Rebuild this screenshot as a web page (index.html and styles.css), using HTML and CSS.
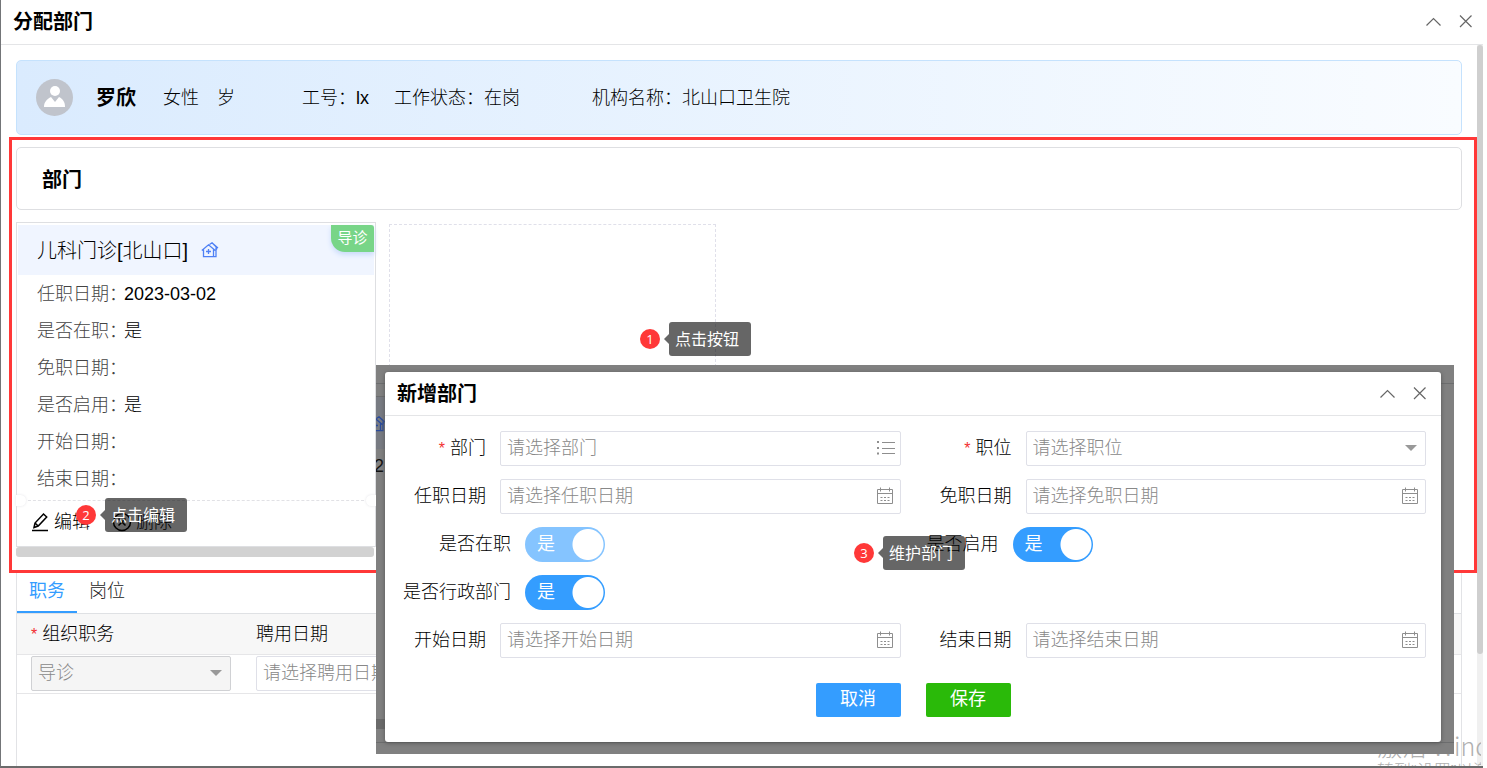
FILE: index.html
```html
<!DOCTYPE html>
<html lang="zh-CN">
<head>
<meta charset="utf-8">
<title>分配部门</title>
<link rel="stylesheet" href="styles.css">
</head>
<body>
<svg class="sprite" aria-hidden="true">
  <symbol id="up" viewBox="0 0 16 16"><path d="M.5 12.500 7.500 5.500 14.500 12.500"/></symbol>
  <symbol id="close" viewBox="0 0 16 16"><path d="M2 2.500 13.500 14M13.500 2.500 2 14"/></symbol>
  <symbol id="calendar" viewBox="0 0 18 18"><path d="M1.500 2.500h15v14h-15zM1.500 6.500h15M4.500 .5v4M13.500 .5v4"/><path d="M4.500 10.500h9M4.500 13.500h9" stroke-dasharray="2 1.500"/></symbol>
  <symbol id="list" viewBox="0 0 20 18"><path d="M6 3.500h13M6 9.500h13M6 14.500h13"/><path d="M1 3h2M1 9h2M1 14.500h2" stroke-width="2"/></symbol>
  <symbol id="house" viewBox="0 0 18 16"><path d="M.8 8.500 7.500 2.800l6.800 5.700M2.500 7.500v7.200h10V7.500M8.500 2.500 11 .8l6 5.200M15 5.500v9.200h-2.500M11 .8l4.500 4.500v2.500M7.500 7v5M5 9.500h5"/></symbol>
</svg>

<div class="window">
  <header class="titlebar">
    <h1 class="title">分配部门</h1>
    <div class="tools">
      <button class="tool" type="button" aria-label="收起"><svg><use href="#up"/></svg></button>
      <button class="tool" type="button" aria-label="关闭"><svg><use href="#close"/></svg></button>
    </div>
  </header>

  <div class="viewport">
    <main class="content">
      <section class="person">
        <svg class="avatar" viewBox="0 0 37 37"><circle cx="18.500" cy="18.500" r="18.500" fill="#c0c4cc"/><circle cx="19" cy="12" r="5" fill="#fff"/><path d="M8 28c0-5 3-8 7-10l4 5 4-5c4 2 6 5 6 10z" fill="#fff"/></svg>
        <strong class="name">罗欣</strong>
        <span class="sex">女性</span>
        <span class="age">岁</span>
        <span class="code">工号：lx</span>
        <span class="state">工作状态：在岗</span>
        <span>机构名称：北山口卫生院</span>
      </section>

      <section class="section-title"><h2 class="title">部门</h2></section>

      <section class="cards">
        <div class="card-scroll">
          <article class="card">
            <div class="card-head">
              <h3 class="card-name">儿科门诊[北山口]</h3>
              <svg class="house"><use href="#house"/></svg>
              <span class="tag">导诊</span>
            </div>
            <dl class="facts">
              <div class="fact"><dt>任职日期：</dt><dd>2023-03-02</dd></div>
              <div class="fact"><dt>是否在职：</dt><dd>是</dd></div>
              <div class="fact"><dt>免职日期：</dt><dd></dd></div>
              <div class="fact"><dt>是否启用：</dt><dd>是</dd></div>
              <div class="fact"><dt>开始日期：</dt><dd></dd></div>
              <div class="fact"><dt>结束日期：</dt><dd></dd></div>
            </dl>
            <div class="card-foot">
              <button class="action" type="button"><svg viewBox="0 0 18 20"><path d="M1 18.500h16M3 15.500l1-4.500L12.500 2l3.200 3L7.200 14zM4 11l3.200 3"/></svg>编辑</button>
              <button class="action" type="button"><svg viewBox="0 0 20 20"><circle cx="10" cy="10" r="8.500"/><path d="M6.500 6.500l7 7M13.500 6.500l-7 7"/></svg>删除</button>
            </div>
          </article>
          <div class="hbar"></div>
        </div>
        <div class="add-slot"></div>
      </section>

      <section class="duties">
        <nav class="tabs">
          <button class="tab active" type="button">职务</button>
          <button class="tab" type="button">岗位</button>
        </nav>
        <table class="table">
          <thead><tr><th class="col-duty"><i class="star">*</i> 组织职务</th><th>聘用日期</th></tr></thead>
          <tbody><tr>
            <td><div class="field short"><select class="control" disabled aria-label="组织职务"><option>导诊</option></select><span class="caret"></span></div></td>
            <td><div class="field short"><input class="control" type="text" placeholder="请选择聘用日期" aria-label="聘用日期"></div></td>
          </tr></tbody>
        </table>
      </section>
    </main>
    <div class="vbar"><div class="vthumb"></div></div>
  </div>

  <div class="frame"></div>
  <div class="watermark"><div class="wm-big">激活 Windows</div><div class="wm-small">转到“设置”以激活</div></div>

  <div class="overlay">
    <div class="behind" aria-hidden="true">
      <div class="behind-gap"></div>
      <div class="behind-line"></div>
      <div class="behind-head"><svg class="house"><use href="#house"/></svg></div>
      <div class="behind-date">2</div>
      <div class="behind-bar"></div>
      <div class="behind-rest"></div>
    </div>
    <form class="dialog" role="dialog" aria-labelledby="dialog-title">
      <header class="titlebar dialog-bar">
        <h2 class="title" id="dialog-title">新增部门</h2>
        <div class="tools">
          <button class="tool" type="button" aria-label="收起"><svg><use href="#up"/></svg></button>
          <button class="tool" type="button" aria-label="关闭"><svg><use href="#close"/></svg></button>
        </div>
      </header>
      <div class="form">
        <label class="label" for="dept"><i class="star">*</i> 部门</label>
        <div class="field"><input class="control" id="dept" type="text" placeholder="请选择部门"><svg class="icon list"><use href="#list"/></svg></div>
        <label class="label" for="post"><i class="star">*</i> 职位</label>
        <div class="field"><select class="control empty" id="post"><option>请选择职位</option></select><span class="caret"></span></div>

        <label class="label" for="hired">任职日期</label>
        <div class="field"><input class="control" id="hired" type="text" placeholder="请选择任职日期"><svg class="icon"><use href="#calendar"/></svg></div>
        <label class="label" for="left">免职日期</label>
        <div class="field"><input class="control" id="left" type="text" placeholder="请选择免职日期"><svg class="icon"><use href="#calendar"/></svg></div>

        <div class="switch-row first">
          <label class="label" for="onjob">是否在职</label>
          <span class="switch"><input id="onjob" type="checkbox" checked disabled><span class="switch-text">是</span></span>
        </div>
        <div class="switch-row">
          <label class="label" for="enabled">是否启用</label>
          <span class="switch"><input id="enabled" type="checkbox" checked><span class="switch-text">是</span></span>
        </div>
        <div class="switch-row first only">
          <label class="label" for="admin">是否行政部门</label>
          <span class="switch"><input id="admin" type="checkbox" checked><span class="switch-text">是</span></span>
        </div>

        <label class="label" for="start">开始日期</label>
        <div class="field"><input class="control" id="start" type="text" placeholder="请选择开始日期"><svg class="icon"><use href="#calendar"/></svg></div>
        <label class="label" for="end">结束日期</label>
        <div class="field"><input class="control" id="end" type="text" placeholder="请选择结束日期"><svg class="icon"><use href="#calendar"/></svg></div>
      </div>
      <footer class="buttons">
        <button class="btn cancel" type="button">取消</button>
        <button class="btn save" type="submit">保存</button>
      </footer>
    </form>
  </div>

  <div class="note note-1"><span class="dot">1</span><span class="tip">点击按钮</span></div>
  <div class="note note-2"><span class="dot">2</span><span class="tip">点击编辑</span></div>
  <div class="note note-3"><span class="dot">3</span><span class="tip">维护部门</span></div>
</div>
</body>
</html>
```
FILE: styles.css
```css
* { box-sizing: border-box; }

body {
  margin: 0;
  background: #fff;
  color: #000;
  font: 300 18px/24px "Liberation Sans", "Noto Sans CJK SC", sans-serif;
}

h1, h2, h3, dl, dd { margin: 0; }

button, input, select { font: inherit; color: inherit; }

button { padding: 0; border: 0; background: none; }

svg { fill: none; stroke: currentColor; }

.sprite { position: absolute; width: 0; height: 0; }

.window {
  position: relative;
  display: flex;
  flex-direction: column;
  height: 100vh;
  margin-right: 4px;
  overflow: hidden;
  border-left: 1px solid #737578;
  border-bottom: 2px solid #6b6b6b;
}

.titlebar {
  display: flex;
  flex: none;
  align-items: center;
  justify-content: space-between;
  height: 45px;
  padding: 0 9px 0 12px;
  border-bottom: 1px solid #e4e5e7;
}

.title { font-size: 20px; font-weight: 700; }

.tools { display: flex; gap: 16px; padding-bottom: 2px; color: #666; }
.tool { width: 16px; height: 16px; display: block; }
.tool svg { display: block; width: 16px; height: 16px; stroke-width: 1.2; }

.viewport { display: flex; flex: 1; min-height: 0; }

.content {
  display: flex;
  flex: 1;
  flex-direction: column;
  min-width: 0;
  padding: 15px 15px 0;
}

.person {
  display: flex;
  flex: none;
  align-items: center;
  height: 75px;
  padding-left: 19px;
  border: 1px solid #c5e2fd;
  border-radius: 5px;
  background: linear-gradient(90deg, #daebfe, #f9fcff);
  white-space: nowrap;
}
.avatar { width: 37px; height: 37px; margin-right: 23px; stroke: none; }
.name { margin-right: 27px; font-size: 20px; font-weight: 700; }
.sex { margin-right: 18px; }
.age { margin-right: 67px; }
.code { margin-right: 25px; }
.state { margin-right: 72px; }

.section-title {
  display: flex;
  flex: none;
  align-items: center;
  height: 63px;
  margin: 12px 0;
  padding: 2px 0 0 25px;
  border: 1px solid #dedfe2;
  border-radius: 5px;
}

.cards { display: flex; flex: none; gap: 13px; }

.card-scroll { width: 360px; }

.card {
  position: relative;
  padding: 2px 1px 0;
  border: 1px solid #dedfe2;
}
.card::before, .card::after {
  content: "";
  position: absolute;
  bottom: 40px;
  width: 10px;
  height: 11px;
  background: #fff;
  box-shadow: 0 0 3px #e4e4e8;
}
.card::before { left: -1px; border-radius: 0 6px 6px 0; }
.card::after { right: -1px; border-radius: 6px 0 0 6px; }

.card-head {
  position: relative;
  display: flex;
  align-items: center;
  gap: 13px;
  height: 50px;
  padding-left: 19px;
  background: #f0f5ff;
}
.card-name { padding-top: 1px; font-size: 20px; font-weight: 300; }
.house { width: 18px; height: 16px; color: #4f80f5; stroke-width: 1.3; }

.tag {
  position: absolute;
  top: 0;
  right: 0;
  width: 43px;
  height: 27px;
  border-radius: 0 3px 0 14px;
  background: #78d588;
  box-shadow: 0 3px 5px #cbdcfa;
  color: #fff;
  font-size: 15px;
  font-weight: 400;
  line-height: 26px;
  text-align: center;
}

.facts {
  display: grid;
  grid-auto-rows: 1fr;
  align-items: center;
  height: 225px;
  padding: 0 0 2px 19px;
}
.fact { display: flex; white-space: nowrap; }
.fact dt { width: 87px; color: #444; }

.card-foot {
  display: flex;
  align-items: center;
  gap: 22px;
  height: 46px;
  padding: 0 0 4px 12px;
  border-top: 1px dashed #e1e1e5;
}
.action { display: flex; align-items: center; gap: 4px; }
.action svg { width: 20px; height: 20px; stroke-width: 1.5; }

.hbar { height: 10px; margin-right: 2px; border-radius: 3px; background: #d2d2d2; }

.add-slot { width: 327px; margin-top: 2px; border: 1px dashed #e0e0ea; }

.duties {
  flex: 1;
  margin-top: 13px;
  border: 1px solid #e2e3e6;
  border-bottom: 0;
}
.tabs { display: flex; height: 43px; border-bottom: 1px solid #dfe1e4; }
.tab { width: 60px; padding-bottom: 2px; color: #222; }
.active { border-bottom: 2px solid #349dff; padding-bottom: 0; color: #349dff; font-weight: 400; }

.table { width: 100%; border-spacing: 0; text-align: left; }
.table th { height: 41px; padding: 0 0 0 14px; background: #f7f7f7; border-bottom: 1px solid #e6e6e8; font-weight: 300; }
.table td { height: 39px; padding: 0 0 1px 14px; border-bottom: 1px solid #e6e6e8; }
.table .col-duty { width: 225px; }

.star { color: #f23030; font-size: 16px; font-style: normal; }

.field { position: relative; min-width: 0; }
.short { width: 200px; }

.control {
  display: block;
  width: 100%;
  height: 35px;
  padding: 0 30px 1px 6px;
  appearance: none;
  border: 1px solid #dfe0e8;
  border-radius: 2px;
  background: #fff;
}
.control::placeholder { color: #888; opacity: 1; }
.control:disabled { border-color: #d0d1d4; background: #f5f5f5; color: #888; opacity: 1; }
.empty { color: #888; }

.icon { position: absolute; top: 8px; right: 7px; width: 18px; height: 18px; color: #8e8e8e; }
.list { right: 5px; width: 20px; }

.caret {
  position: absolute;
  top: 14px;
  right: 9px;
  border: 6px solid transparent;
  border-top: 6px solid #999;
  border-bottom: 0;
}

.vbar { width: 6px; background: #f0f0f0; }
.vthumb { height: 84.500%; border-radius: 3px; background: #cfcfcf; }

.frame {
  position: absolute;
  top: 137px;
  left: 8px;
  right: 6px;
  height: 436px;
  border: 3px solid #ff3838;
}

.watermark {
  position: absolute;
  top: 730px;
  left: calc(100% - 106px);
  width: 104px;
  overflow: hidden;
  color: #b0b0b0;
  white-space: nowrap;
}
.wm-big { font: 300 25px/30px "Noto Sans CJK SC", sans-serif; }
.wm-small { font-size: 17px; }

.overlay {
  position: absolute;
  top: 365px;
  left: 375px;
  right: 29px;
  height: 389px;
  padding: 7px 13px 12px 9px;
  background: #808080;
}

.behind { position: absolute; top: 0; left: 0; right: 0; height: 100%; overflow: hidden; }
.behind-gap { height: 19px; border-bottom: 1px solid #6c6d6e; }
.behind-line { width: 9px; height: 13px; border-bottom: 1px solid #6c6d6e; }
.behind-head { width: 9px; height: 52px; padding-top: 19px; overflow: hidden; background: #787b82; }
.behind-head .house { display: block; margin-left: -8px; color: #2b4b9b; }
.behind-date { height: 270px; padding-top: 5px; margin-left: -2px; color: #111; }
.behind-bar { width: 9px; height: 10px; background: #6a6a6a; }
.behind-rest { height: 14px; border-bottom: 1px solid #6c6d6e; }

.dialog {
  position: relative;
  height: 100%;
  border-radius: 3px;
  background: #fff;
  box-shadow: 0 1px 4px #555;
}
.dialog-bar { height: 44px; padding-right: 13px; }

.form {
  display: grid;
  grid-template-columns: 115px 1fr 125px 1fr;
  gap: 13px 0;
  align-items: center;
  padding: 15px 15px 0 0;
}
.label { padding: 0 14px 1px 0; text-align: right; white-space: nowrap; }

.switch-row { display: flex; grid-column: span 2; align-items: center; }
.switch-row .label { width: 112px; }
.first .label { width: 140px; }
.only { grid-column: 1 / -1; }

.switch { position: relative; display: block; width: 80px; height: 35px; }
.switch input {
  width: 100%;
  height: 100%;
  margin: 0;
  appearance: none;
  border-radius: 18px;
  background: radial-gradient(circle at 63px 50%, #fff 15px, transparent 16px) #349dff;
}
.switch input:disabled { background-color: #85c4ff; }
.switch-text { position: absolute; top: 5px; left: 12px; color: #fff; font-weight: 400; pointer-events: none; }

.buttons { display: flex; justify-content: center; gap: 25px; padding-top: 25px; }
.btn { width: 85px; height: 34px; padding-bottom: 2px; border-radius: 2px; color: #fff; font-weight: 400; }
.cancel { background: #349dff; }
.save { background: #2aba09; }

.note { position: absolute; display: flex; align-items: center; gap: 9px; }
.note-1 { top: 322px; left: 639px; }
.note-2 { top: 498px; left: 75px; }
.note-3 { top: 536px; left: 853px; }
.dot {
  width: 20px;
  height: 20px;
  border-radius: 50%;
  background: #ff3838;
  color: #fff;
  font: 13px/20px "Open Sans", sans-serif;
  text-align: center;
}
.tip {
  position: relative;
  width: 82px;
  height: 34px;
  padding-left: 6px;
  border-radius: 3px;
  background: rgba(0, 0, 0, .6);
  color: #fff;
  font-size: 16px;
  font-weight: 400;
  line-height: 35px;
}
.tip::before {
  content: "";
  position: absolute;
  top: 12px;
  left: -5px;
  border: 5px solid transparent;
  border-right-color: #666;
  border-left: 0;
}
```
